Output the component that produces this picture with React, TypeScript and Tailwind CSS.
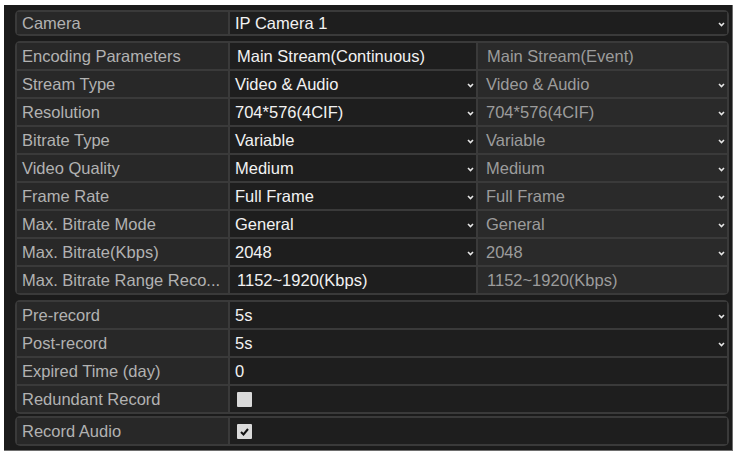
const Chevron = () => (
    <svg width="7" height="5" viewBox="0 0 7 5" className="shrink-0 mt-[2px]">
        <polyline points="1,1 3.5,3.5 6,1" fill="none" stroke="#e6e6e6" strokeWidth="1.6" />
    </svg>
);

const Label = ({ children }: { children: React.ReactNode }) => (
    <div className="flex items-center bg-[#282828] pl-[5px] text-[#b2b2b2] whitespace-nowrap overflow-hidden">
        {children}
    </div>
);

const Value = ({ text, select, dim, pl = 'pl-[5px]' }: { text: string; select?: boolean; dim?: boolean; pl?: string }) => (
    <div
        className={`flex items-center justify-between ${pl} pr-[2px] whitespace-nowrap ${
            dim ? 'bg-[#2a2a2a] text-[#9c9c9c]' : 'bg-[#1e1e1e] text-[#f2f2f2]'
        }`}
    >
        <span>{text}</span>
        {select && <Chevron />}
    </div>
);

const Checkbox = ({ checked }: { checked?: boolean }) => (
    <div className="w-[15px] h-[15px] bg-[#dadada] rounded-[1px] flex items-center justify-center">
        {checked && (
            <svg width="11" height="11" viewBox="0 0 11 11">
                <polyline points="2,6 4.5,8.5 9,3" fill="none" stroke="#111" strokeWidth="2" />
            </svg>
        )}
    </div>
);

const encoding = [
    { label: 'Stream Type', value: 'Video & Audio' },
    { label: 'Resolution', value: '704*576(4CIF)' },
    { label: 'Bitrate Type', value: 'Variable' },
    { label: 'Video Quality', value: 'Medium' },
    { label: 'Frame Rate', value: 'Full Frame' },
    { label: 'Max. Bitrate Mode', value: 'General' },
    { label: 'Max. Bitrate(Kbps)', value: '2048' },
];

export default function App() {
    return (
        <div className="w-[738px] h-[458px] bg-white pt-[5px] pl-[4px] font-['Liberation_Sans',Arial,sans-serif] text-[16.5px] leading-none">
            <div className="w-[729px] h-[446px] bg-[#1b1b1b] border-r border-b border-[#6e6e6e] pl-[11px] pr-[3px] pt-[5px] flex flex-col">
                {/* camera */}
                <div className="bg-[#3a3a3a] p-[2px] rounded-[5px] grid grid-cols-[211px_1fr] gap-[2px] auto-rows-[22px]">
                    <Label>Camera</Label>
                    <div className="flex items-center justify-between bg-[#1e1e1e] text-[#f2f2f2] pl-[5px] pr-[2px]">
                        <span>IP Camera 1</span>
                        <Chevron />
                    </div>
                </div>

                {/* encoding parameters */}
                <div className="mt-[5px] bg-[#3a3a3a] p-[2px] rounded-[5px] grid grid-cols-[211px_246px_1fr] gap-[2px] auto-rows-[26px]">
                    <Label>Encoding Parameters</Label>
                    <Value text="Main Stream(Continuous)" pl="pl-[7px]" />
                    <Value text="Main Stream(Event)" dim pl="pl-[9px]" />
                    {encoding.map((row) => (
                        <div key={row.label} className="contents">
                            <Label>{row.label}</Label>
                            <Value text={row.value} select />
                            <Value text={row.value} select dim pl="pl-[8px]" />
                        </div>
                    ))}
                    <Label>Max. Bitrate Range Reco...</Label>
                    <Value text="1152~1920(Kbps)" pl="pl-[7px]" />
                    <Value text="1152~1920(Kbps)" dim pl="pl-[9px]" />
                </div>

                {/* record */}
                <div className="mt-[5px] bg-[#3a3a3a] p-[2px] rounded-[5px] grid grid-cols-[211px_1fr] gap-[2px] auto-rows-[26px]">
                    <Label>Pre-record</Label>
                    <Value text="5s" select />
                    <Label>Post-record</Label>
                    <Value text="5s" select />
                    <Label>Expired Time (day)</Label>
                    <Value text="0" />
                    <Label>Redundant Record</Label>
                    <div className="flex items-center bg-[#1e1e1e] pl-[7px]">
                        <Checkbox />
                    </div>
                </div>

                {/* audio */}
                <div className="mt-[2px] bg-[#3a3a3a] p-[2px] rounded-[5px] grid grid-cols-[211px_1fr] gap-[2px] auto-rows-[26px]">
                    <Label>Record Audio</Label>
                    <div className="flex items-center bg-[#1e1e1e] pl-[7px]">
                        <Checkbox checked />
                    </div>
                </div>
            </div>
        </div>
    );
}
